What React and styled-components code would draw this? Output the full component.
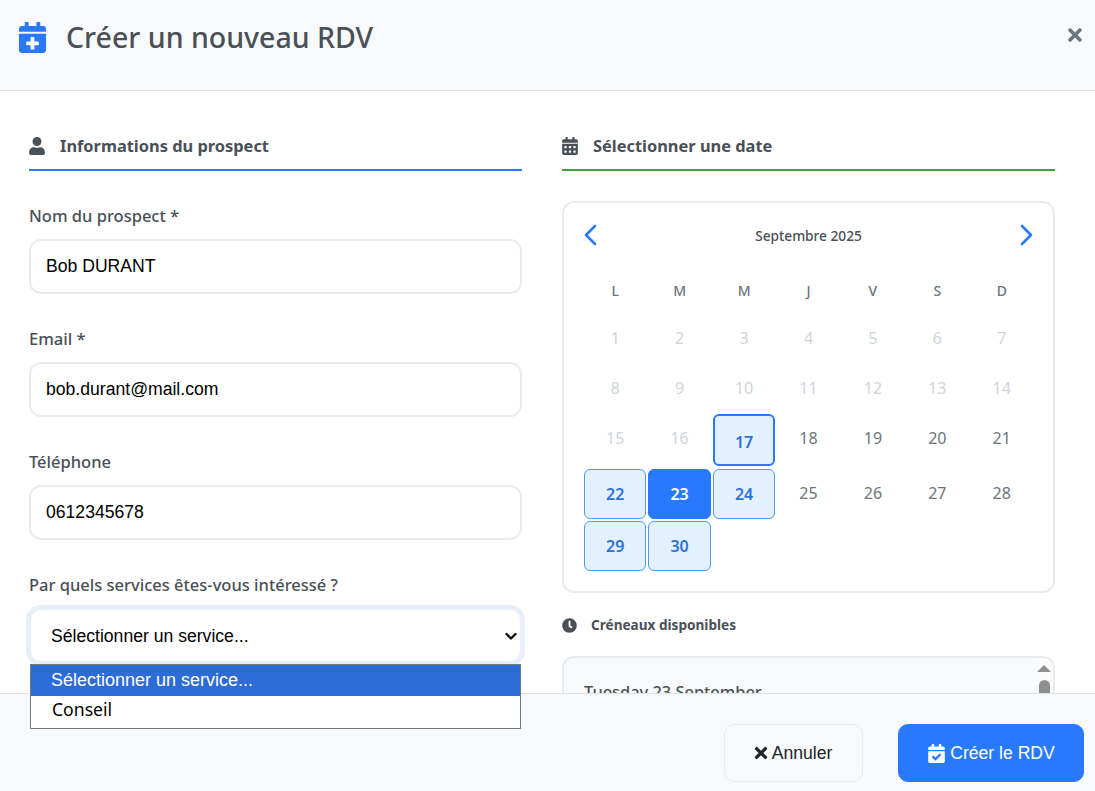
import React from "react";
import styled, { createGlobalStyle, css } from "styled-components";
import {
  FaCalendarPlus,
  FaCalendarCheck,
  FaCalendarAlt,
  FaUser,
  FaClock,
  FaTimes
} from "react-icons/fa";

const blue = "#2979ff";
const uiFont = `"Noto Sans", "Open Sans", sans-serif`;
const fieldFont = `"Liberation Sans", Arial, sans-serif`;

const GlobalStyle = createGlobalStyle`
  html, body {
    margin: 0;
    height: 100%;
    overflow: hidden;
    background: #fff;
  }
  * {
    box-sizing: border-box;
  }
`;

const Modal = styled.div`
  height: 791px;
  display: flex;
  flex-direction: column;
  font-family: ${uiFont};
  color: #495057;
`;

const Header = styled.header`
  height: 91px;
  flex: none;
  display: flex;
  align-items: flex-start;
  padding: 22px 10px 0 17px;
  background: #f8f9fa;
  border-bottom: 1px solid #dee2e6;
`;

const Title = styled.h1`
  flex: 1;
  margin: 0 0 0 18px;
  font-size: 28.5px;
  line-height: 31px;
  font-weight: 500;
`;

const CloseButton = styled.button`
  border: 0;
  padding: 0;
  margin-top: 3px;
  background: none;
  color: #6c757d;
  display: flex;
`;

const Body = styled.main`
  flex: 1;
  min-height: 0;
  display: grid;
  grid-template-columns: 493px 493px;
  gap: 40px;
  padding: 0 40px 0 29px;
`;

const Column = styled.section`
  min-width: 0;
  padding-top: 40px;
  ${props =>
    props.$clip &&
    css`
      overflow: hidden;
    `}
`;

const SectionTitle = styled.h2`
  height: 40px;
  margin: 0 0 ${props => props.$gap}px;
  display: flex;
  align-items: flex-start;
  gap: 14px;
  font-size: 16.4px;
  line-height: 29px;
  font-weight: 700;
  border-bottom: 2px solid ${props => props.$accent};
  svg {
    margin: 6px 0 0 -1px;
  }
`;

const Field = styled.div`
  margin-bottom: 33px;
  position: relative;
`;

const Label = styled.label`
  display: block;
  margin-bottom: 11px;
  font-size: 16.5px;
  line-height: 24px;
  font-weight: 500;
`;

const fieldBox = css`
  display: block;
  width: 100%;
  height: 55px;
  font-family: ${fieldFont};
  font-size: 17.6px;
  color: #000;
  background: #fff;
  border: 2px solid #e9ecef;
  border-radius: 12px;
  outline: none;
`;

const Input = styled.input`
  ${fieldBox};
  padding: 0 15px;
`;

const Select = styled.select`
  ${fieldBox};
  appearance: none;
  padding: 0 20px;
  border-color: #e9effa;
  box-shadow: 0 0 0 3px #e9effa;
`;

const SelectArrow = styled.svg`
  position: absolute;
  right: 5px;
  top: 59px;
  width: 12px;
  height: 9px;
  fill: none;
  stroke: #111;
  stroke-width: 2.4;
  stroke-linecap: round;
  stroke-linejoin: round;
  pointer-events: none;
`;

const OptionList = styled.ul`
  position: absolute;
  z-index: 5;
  left: 1px;
  right: 1px;
  top: 91px;
  margin: 0;
  padding: 0;
  list-style: none;
  background: #fff;
  border: 1px solid #767676;
`;

const Option = styled.li`
  padding-left: ${props => (props.$active ? 20 : 21)}px;
  height: ${props => (props.$active ? 31 : 32)}px;
  font-size: ${props => (props.$active ? 18 : 17.6)}px;
  line-height: ${props => (props.$active ? 31 : 27)}px;
  font-family: ${props => (props.$active ? fieldFont : uiFont)};
  color: ${props => (props.$active ? "#fff" : "#000")};
  background: ${props => (props.$active ? "#2d6bd6" : "#fff")};
`;

const CalendarCard = styled.div`
  height: 392px;
  padding: 20px;
  border: 2px solid #e9ecef;
  border-radius: 12px;
  background: #fff;
`;

const CalendarNav = styled.div`
  height: 24px;
  display: flex;
  align-items: center;
  justify-content: space-between;
`;

const MonthLabel = styled.div`
  font-size: 13.7px;
  font-weight: 500;
  color: #495057;
`;

const Chevron = styled.svg`
  width: 13px;
  height: 22px;
  fill: none;
  stroke: ${blue};
  stroke-width: 2.6;
  stroke-linecap: round;
  stroke-linejoin: round;
`;

const DayGrid = styled.div`
  margin-top: 32px;
  display: grid;
  grid-template-columns: repeat(7, 1fr);
  grid-template-rows: 33px 48px 48px 53px 50px 50px;
  gap: 2px;
`;

const WeekDay = styled.div`
  text-align: center;
  font-size: 14px;
  line-height: 24px;
  font-weight: 500;
  color: #6c757d;
`;

const Day = styled.div`
  display: flex;
  align-items: center;
  justify-content: center;
  font-size: 16px;
  border-radius: 6px;
  color: ${props => (props.$muted ? "#ced4da" : "#6c757d")};
  height: 48px;
  ${props =>
    props.$available &&
    css`
      height: 50px;
      align-self: end;
      font-weight: 600;
      color: #2b72d9;
      background: #e3f0fd;
      border: 1px solid #4d9cf5;
    `}
  ${props =>
    props.$today &&
    css`
      height: 52px;
      align-self: start;
      padding-top: 3px;
      border: 2px solid ${blue};
    `}
  ${props =>
    props.$selected &&
    css`
      color: #fff;
      background: ${blue};
      border-color: ${blue};
    `}
`;

const SlotsTitle = styled.h3`
  margin: 22px 0 21px;
  display: flex;
  align-items: center;
  gap: 14px;
  font-size: 13.6px;
  line-height: 20px;
  font-weight: 700;
`;

const SlotsBox = styled.div`
  height: 120px;
  position: relative;
  padding: 22px 20px;
  background: #f8f9fa;
  border: 2px solid #e9ecef;
  border-radius: 12px;
  overflow: hidden;
`;

const SlotDate = styled.div`
  font-size: 16.4px;
  line-height: 24px;
  font-weight: 500;
`;

const ScrollTrack = styled.div`
  position: absolute;
  top: 0;
  right: 0;
  bottom: 0;
  width: 20px;
  padding-left: 2px;
  background: #fbfbfb;
`;

const ScrollArrow = styled.div`
  margin: 7px auto 0;
  width: 0;
  border-left: 7px solid transparent;
  border-right: 7px solid transparent;
  border-bottom: 7px solid #8f8f8f;
`;

const ScrollThumb = styled.div`
  margin: 8px auto 0;
  width: 11px;
  height: 70px;
  border-radius: 6px;
  background: #8f8f8f;
`;

const Footer = styled.footer`
  height: 98px;
  flex: none;
  display: flex;
  justify-content: flex-end;
  gap: 35px;
  padding: 30px 11px 0 0;
  background: #f8f9fa;
  border-top: 1px solid #dee2e6;
  position: relative;
`;

const Button = styled.button`
  height: 58px;
  padding: 0 ${props => (props.$primary ? 0 : 3)}px 0 0;
  width: ${props => (props.$primary ? 186 : 139)}px;
  display: flex;
  align-items: center;
  justify-content: center;
  gap: ${props => (props.$primary ? 4 : 2)}px;
  font-family: ${fieldFont};
  font-size: 17.6px;
  border-radius: 10px;
  color: ${props => (props.$primary ? "#fff" : "#212529")};
  background: ${props => (props.$primary ? blue : "transparent")};
  border: 1px solid ${props => (props.$primary ? blue : "#e9ecef")};
`;

const weekDays = ["L", "M", "M", "J", "V", "S", "D"];
const availableDays = [22, 24, 29, 30];

function CalendarDay({ day }) {
  if (day === 17) return <Day $available $today>{day}</Day>;
  if (day === 23) return <Day $available $selected>{day}</Day>;
  if (availableDays.includes(day)) return <Day $available>{day}</Day>;
  return <Day $muted={day < 17}>{day}</Day>;
}

export default function App() {
  return (
    <Modal>
      <GlobalStyle />
      <Header>
        <FaCalendarPlus size={31} color={blue} />
        <Title>Créer un nouveau RDV</Title>
        <CloseButton>
          <FaTimes size={20} />
        </CloseButton>
      </Header>
      <Body>
        <Column>
          <SectionTitle $accent={blue} $gap={33}>
            <FaUser size={18} />
            Informations du prospect
          </SectionTitle>
          <Field>
            <Label>Nom du prospect *</Label>
            <Input defaultValue="Bob DURANT" />
          </Field>
          <Field>
            <Label>Email *</Label>
            <Input defaultValue="bob.durant@mail.com" />
          </Field>
          <Field>
            <Label>Téléphone</Label>
            <Input defaultValue="0612345678" />
          </Field>
          <Field>
            <Label>Par quels services êtes-vous intéressé ?</Label>
            <Select defaultValue="">
              <option value="">Sélectionner un service...</option>
              <option value="conseil">Conseil</option>
            </Select>
            <SelectArrow viewBox="0 0 12 9">
              <polyline points="1.5,2 6,6.5 10.5,2" />
            </SelectArrow>
            <OptionList>
              <Option $active>Sélectionner un service...</Option>
              <Option>Conseil</Option>
            </OptionList>
          </Field>
        </Column>
        <Column $clip>
          <SectionTitle $accent="#43a047" $gap={30}>
            <FaCalendarAlt size={18} />
            Sélectionner une date
          </SectionTitle>
          <CalendarCard>
            <CalendarNav>
              <Chevron viewBox="0 0 13 22">
                <polyline points="11,2 2,11 11,20" />
              </Chevron>
              <MonthLabel>Septembre 2025</MonthLabel>
              <Chevron viewBox="0 0 13 22">
                <polyline points="2,2 11,11 2,20" />
              </Chevron>
            </CalendarNav>
            <DayGrid>
              {weekDays.map((d, i) => (
                <WeekDay key={i}>{d}</WeekDay>
              ))}
              {Array.from({ length: 30 }, (_, i) => (
                <CalendarDay key={i} day={i + 1} />
              ))}
            </DayGrid>
          </CalendarCard>
          <SlotsTitle>
            <FaClock size={15} />
            Créneaux disponibles
          </SlotsTitle>
          <SlotsBox>
            <SlotDate>Tuesday 23 September</SlotDate>
            <ScrollTrack>
              <ScrollArrow />
              <ScrollThumb />
            </ScrollTrack>
          </SlotsBox>
        </Column>
      </Body>
      <Footer>
        <Button>
          <FaTimes size={18} />
          Annuler
        </Button>
        <Button $primary>
          <FaCalendarCheck size={19} />
          Créer le RDV
        </Button>
      </Footer>
    </Modal>
  );
}
